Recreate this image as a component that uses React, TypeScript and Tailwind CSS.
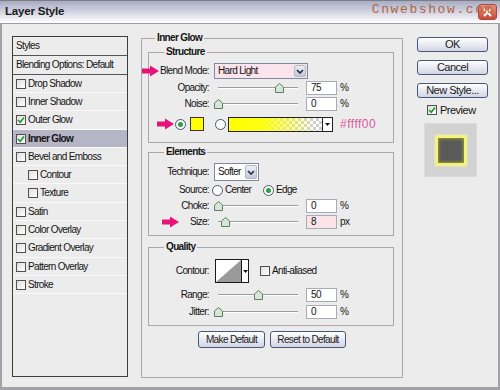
import type { ReactNode } from "react";

const ui = "font-['Liberation_Sans',Arial,sans-serif]";

interface ILayer {
  name: string;
  checked: boolean;
  nested?: boolean;
  selected?: boolean;
  h: string;
}

const layers: ILayer[] = [
  { name: "Drop Shadow", checked: false, h: "h-[18px]" },
  { name: "Inner Shadow", checked: false, h: "h-[18px]" },
  { name: "Outer Glow", checked: true, h: "h-[19px]" },
  { name: "Inner Glow", checked: true, selected: true, h: "h-[18px]" },
  { name: "Bevel and Emboss", checked: false, h: "h-[18px]" },
  { name: "Contour", checked: false, nested: true, h: "h-[18px]" },
  { name: "Texture", checked: false, nested: true, h: "h-[19px]" },
  { name: "Satin", checked: false, h: "h-[18px]" },
  { name: "Color Overlay", checked: false, h: "h-[18px]" },
  { name: "Gradient Overlay", checked: false, h: "h-[19px]" },
  { name: "Pattern Overlay", checked: false, h: "h-[18px]" },
  { name: "Stroke", checked: false, h: "h-[18px]" },
];

function CheckBox({ checked }: { checked?: boolean }) {
  return (
    <span className="flex h-[10px] w-[10px] shrink-0 items-center justify-center border border-[#505050] bg-gradient-to-br from-[#dedede] to-white">
      {checked && (
        <svg width="8" height="8" viewBox="0 0 8 8">
          <path d="M1 4 L3.2 6.2 L7 1.5" fill="none" stroke="#1f9a2a" strokeWidth="1.6" />
        </svg>
      )}
    </span>
  );
}

function Radio({ checked }: { checked?: boolean }) {
  return (
    <span className="flex h-[11px] w-[11px] shrink-0 items-center justify-center rounded-full border border-[#4b5563] bg-white">
      {checked && <span className="h-[5px] w-[5px] rounded-full bg-[#27a046]" />}
    </span>
  );
}

function PinkArrow() {
  return (
    <svg width="17" height="11" viewBox="0 0 17 11">
      <path d="M0 3 H8 V0 L17 5.5 L8 11 V8 H0 Z" fill="#e8127c" />
    </svg>
  );
}

function Chevron() {
  return (
    <svg width="8" height="5" viewBox="0 0 8 5">
      <path d="M1 1 L4 4 L7 1" fill="none" stroke="#26324a" strokeWidth="1.7" />
    </svg>
  );
}

function Slider({ at }: { at: number }) {
  return (
    <div className="relative ml-[9px] flex h-full w-[80px] items-center">
      <div className="h-[2px] w-full border-t border-[#9c9c9c] bg-white" />
      <div className="absolute top-1/2 -translate-y-1/2 leading-none" style={{ left: at - 4 }}>
        <svg width="9" height="10" viewBox="0 0 9 10" className="block">
          <path d="M0.5 9.5 V4 L4.5 0.5 L8.5 4 V9.5 Z" fill="#d6e6d6" stroke="#5f7d66" />
        </svg>
      </div>
    </div>
  );
}

function SliderRow(props: {
  label: string;
  at: number;
  value: string;
  unit?: string;
  pink?: boolean;
  arrow?: boolean;
  h: string;
  mt?: string;
}) {
  return (
    <div className={`relative flex items-center ${props.h} ${props.mt ?? ""}`}>
      {props.arrow && (
        <span className="absolute left-[13px] top-1/2 -translate-y-1/2 leading-none">
          <PinkArrow />
        </span>
      )}
      <span className="w-[60px] text-right">{props.label}</span>
      <Slider at={props.at} />
      <span
        className={`ml-[8px] flex h-[14px] w-[31px] items-center border border-[#a7adb6] pl-[4px] ${
          props.pink ? "bg-[#fbe3ea]" : "bg-white"
        }`}
      >
        {props.value}
      </span>
      <span className="ml-[3px]">{props.unit ?? "%"}</span>
    </div>
  );
}

function Select({ text, w, h, pink }: { text: string; w: string; h: string; pink?: boolean }) {
  return (
    <div className={`ml-[5px] flex items-stretch border border-[#7f8a9c] ${w} ${h} ${pink ? "bg-[#fce4ec]" : "bg-white"}`}>
      <span className="flex flex-1 items-center pl-[3px]">{text}</span>
      <span className="m-[1px] flex w-[12px] items-center justify-center rounded-[2px] border border-[#b0b8c8] bg-gradient-to-b from-[#eef0f6] to-[#c2c8d8]">
        <Chevron />
      </span>
    </div>
  );
}

function Group({ title, h, children, pt }: { title: string; h: string; pt: string; children: ReactNode }) {
  return (
    <fieldset className={`w-[246px] border border-[#a9a9a9] ${h} ${pt}`}>
      <legend className="ml-[15px] px-[2px] font-bold leading-[12px]">{title}</legend>
      {children}
    </fieldset>
  );
}

function Btn({ children, w, h }: { children: ReactNode; w: string; h: string }) {
  return (
    <div
      className={`flex items-center justify-center rounded-[3px] border border-[#47577c] bg-gradient-to-b from-white to-[#d3d5e4] text-[#1a1a1a] ${w} ${h}`}
    >
      {children}
    </div>
  );
}

export default function App() {
  return (
    <div
      className={`${ui} flex h-[390px] w-[500px] flex-col overflow-hidden bg-[#ececec] text-[10px] leading-none tracking-[-0.65px] text-[#141414]`}
    >
      {/* title bar */}
      <div className="relative flex h-[24px] shrink-0 items-center justify-between border-y border-t-[#7c7c84] border-b-[#9c9ca4] bg-gradient-to-b from-[#a9abc4] to-white pl-[5px] pr-[3px]">
        <span className="text-[11.5px] font-bold tracking-[-0.2px] text-[#1a1a1a]">Layer Style</span>
        <span className="flex h-[16px] w-[19px] items-center justify-center rounded-[3px] border border-[#a8473a] bg-gradient-to-b from-[#e89080] to-[#c84a38]">
          <svg width="9" height="9" viewBox="0 0 9 9">
            <path d="M1 1 L8 8 M8 1 L1 8" stroke="#fff" strokeWidth="1.8" />
          </svg>
        </span>
        <span className="absolute right-[6px] top-[2px] font-['Liberation_Mono',monospace] text-[13px] tracking-[1.6px] text-[#b0653d]">
          Cnwebshow.com
        </span>
      </div>

      <div className="flex flex-1 border-x-2 border-b-[3px] border-[#a2a2a8] pl-[10px] pt-[8px]">
        {/* styles list */}
        <div className="mt-[4px] flex h-[341px] w-[116px] shrink-0 flex-col border border-[#3d3d3d]">
          <div className="flex h-[19px] items-center border-b border-[#555] pl-[3px]">Styles</div>
          <div className="flex h-[19px] items-center border-b border-[#555] pl-[3px]">Blending Options: Default</div>
          {layers.map((layer, i) => (
            <div
              key={i}
              className={`flex items-center border-b border-[#f8f8f8] ${layer.h} ${layer.nested ? "pl-[15px]" : "pl-[3px]"} ${
                layer.selected ? "bg-[#b5b5c6] font-bold" : ""
              }`}
            >
              <CheckBox checked={layer.checked} />
              <span className="ml-[2px]">{layer.name}</span>
            </div>
          ))}
        </div>

        {/* inner glow settings */}
        <fieldset className="ml-[13px] h-[346px] w-[262px] shrink-0 border border-[#a9a9a9] px-[6px]">
          <legend className="ml-[7px] px-[2px] font-bold leading-[12px]">Inner Glow</legend>

          <div className="mt-[2px]">
            <Group title="Structure" h="h-[97px]" pt="pt-[5px]">
              <div className="relative flex h-[16px] items-center">
                <span className="absolute -left-[7px] top-1/2 -translate-y-1/2 leading-none">
                  <PinkArrow />
                </span>
                <span className="w-[60px] text-right">Blend Mode:</span>
                <Select text="Hard Light" w="w-[94px]" h="h-[16px]" pink />
              </div>
              <SliderRow label="Opacity:" at={61} value="75" h="h-[16px]" mt="mt-[1px]" />
              <SliderRow label="Noise:" at={0} value="0" h="h-[16px]" />
              <div className="relative mt-[4px] flex h-[16px] items-center">
                <span className="absolute left-[8px] top-1/2 -translate-y-1/2 leading-none">
                  <PinkArrow />
                </span>
                <span className="ml-[26px]">
                  <Radio checked />
                </span>
                <span className="ml-[4px] h-[14px] w-[14px] border border-[#333] bg-[#ffff00]" />
                <span className="ml-[11px]">
                  <Radio />
                </span>
                <div className="ml-[2px] flex h-[15px] border border-[#222]">
                  <div className="h-full w-[93px] bg-[conic-gradient(#cfcfcf_25%,#fff_0_50%,#cfcfcf_0_75%,#fff_0)] bg-[length:6px_6px]">
                    <div className="h-full w-full bg-[linear-gradient(to_right,#ffff00_0%,#ffff10_35%,rgba(255,255,60,0)_92%)]" />
                  </div>
                  <span className="flex w-[10px] items-center justify-center border-l border-[#222] bg-white">
                    <svg width="5" height="3" viewBox="0 0 5 3">
                      <path d="M0 0 H5 L2.5 3 Z" fill="#111" />
                    </svg>
                  </span>
                </div>
                <span className="ml-[7px] text-[12px] tracking-[0.5px] text-[#e2579d]">#ffff00</span>
              </div>
            </Group>
          </div>

          <div className="mt-[3px]">
            <Group title="Elements" h="h-[90px]" pt="pt-[5px]">
              <div className="flex h-[18px] items-center">
                <span className="w-[60px] text-right">Technique:</span>
                <Select text="Softer" w="w-[45px]" h="h-[18px]" />
              </div>
              <div className="flex h-[18px] items-center">
                <span className="w-[60px] text-right">Source:</span>
                <span className="ml-[3px] flex w-[51px] items-center">
                  <Radio />
                  <span className="ml-[2px]">Center</span>
                </span>
                <Radio checked />
                <span className="ml-[2px]">Edge</span>
              </div>
              <SliderRow label="Choke:" at={0} value="0" h="h-[14px]" />
              <SliderRow label="Size:" at={7} value="8" unit="px" pink arrow h="h-[14px]" mt="mt-[2px]" />
            </Group>
          </div>

          <div className="mt-[5px]">
            <Group title="Quality" h="h-[85px]" pt="pt-[6px]">
              <div className="flex h-[24px] items-center">
                <span className="w-[60px] text-right">Contour:</span>
                <div className="ml-[6px] flex h-[24px] w-[34px] border border-[#1a1a1a] bg-white">
                  <svg width="25" height="22" viewBox="0 0 25 22" className="shrink-0">
                    <path d="M0 22 L25 0 L25 22 Z" fill="#9a9a9a" />
                  </svg>
                  <span className="flex w-[7px] items-center justify-center border-l border-[#1a1a1a]">
                    <svg width="5" height="3" viewBox="0 0 5 3">
                      <path d="M0 0 H5 L2.5 3 Z" fill="#111" />
                    </svg>
                  </span>
                </div>
                <span className="ml-[11px]">
                  <CheckBox />
                </span>
                <span className="ml-[2px]">Anti-aliased</span>
              </div>
              <SliderRow label="Range:" at={40} value="50" h="h-[13px]" mt="mt-[5px]" />
              <SliderRow label="Jitter:" at={0} value="0" h="h-[13px]" mt="mt-[4px]" />
            </Group>
          </div>

          <div className="mt-[5px] flex justify-center gap-[5px]">
            <Btn w="w-[67px]" h="h-[17px]">Make Default</Btn>
            <Btn w="w-[76px]" h="h-[17px]">Reset to Default</Btn>
          </div>
        </fieldset>

        {/* buttons + preview */}
        <div className="ml-[14px] mt-[5px] flex w-[71px] shrink-0 flex-col text-[11px] tracking-[-0.5px]">
          <Btn w="w-[71px]" h="h-[15px]">OK</Btn>
          <div className="mt-[8px]">
            <Btn w="w-[71px]" h="h-[15px]">Cancel</Btn>
          </div>
          <div className="mt-[8px]">
            <Btn w="w-[71px]" h="h-[15px]">New Style...</Btn>
          </div>
          <div className="ml-[10px] mt-[7px] flex h-[10px] items-center">
            <CheckBox checked />
            <span className="ml-[3px]">Preview</span>
          </div>
          <div className="ml-[7px] mt-[8px] flex h-[54px] w-[53px] items-center justify-center border border-[#dadada] bg-[#d2d2d2]">
            <div className="h-[29px] w-[30px] border-2 border-[#f4f478] bg-[#5a5a5a] shadow-[0_0_2px_1px_rgba(255,255,140,0.9),inset_0_0_3px_1px_rgba(170,170,40,0.8)]" />
          </div>
        </div>
      </div>
    </div>
  );
}
